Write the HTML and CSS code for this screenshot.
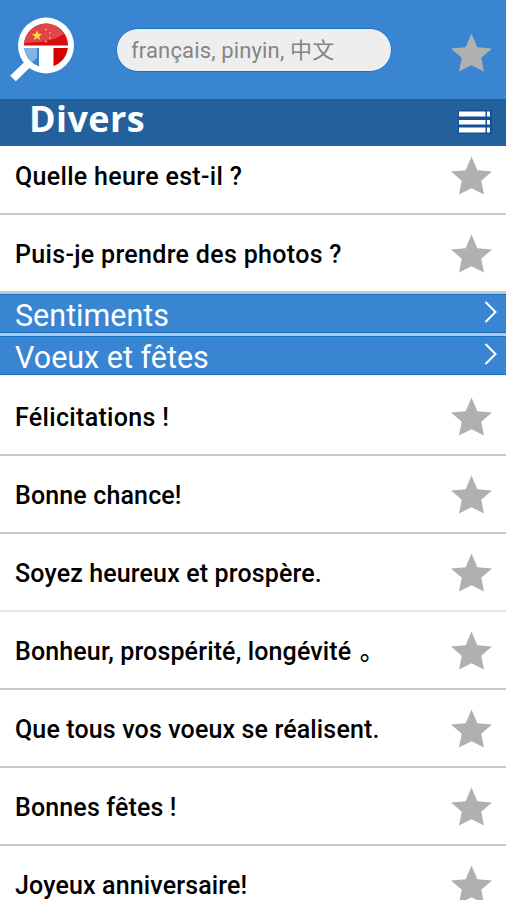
FILE: index.html
```html
<!DOCTYPE html>
<html lang="fr">
<head>
  <meta charset="UTF-8">
  <meta name="viewport" content="width=device-width, initial-scale=1.0">
  <title>Divers</title>
  <link rel="stylesheet" href="styles.css">
</head>
<body>

  <svg class="hidden">
    <symbol id="star" viewBox="0 0 42 40">
      <path d="M21 0 L27 14 L42 15.3 L31 24.8 L33.8 39 L21 32.6 L8.2 39 L11 24.8 L0 15.3 L15 14 Z"/>
    </symbol>
    <symbol id="chevron" viewBox="0 0 14 24">
      <path d="M1.5 2 L11.5 12 L1.5 22" fill="none" stroke="#fff" stroke-width="2"/>
    </symbol>
  </svg>

  <header class="header">
    <svg class="logo" viewBox="0 0 66 66">
      <clipPath id="flags"><circle cx="37" cy="28.5" r="22"/></clipPath>
      <path d="M22 44 L4 61.5" stroke="#fff" stroke-width="8"/>
      <circle cx="37" cy="28.5" r="28" fill="#fff"/>
      <g clip-path="url(#flags)">
        <rect x="14" y="5" width="46" height="23.5" fill="#d40f12"/>
        <path d="M14 5 H53 L55 17 C45 24 30 26 14 26 Z" fill="#e04547"/>
        <rect x="14" y="31" width="16" height="22" fill="#3a85d2"/>
        <path d="M14 31 H28 V41 C23 46 19 47 14 48 Z" fill="#83b3e5"/>
        <rect x="44.5" y="31" width="16" height="22" fill="#d40000"/>
      </g>
      <path d="M28 13.5 L29.4 16.7 L33 17.1 L30.2 19.5 L31.2 23 L28 21.1 L24.8 23 L25.8 19.5 L23 17.1 L26.6 16.7 Z" fill="#ffd84a"/>
      <g fill="#f5a03c">
        <circle cx="37" cy="12.5" r="1.1"/>
        <circle cx="41" cy="16" r="1.1"/>
        <circle cx="41" cy="21" r="1.1"/>
        <circle cx="37" cy="24.5" r="1.1"/>
      </g>
    </svg>
    <input class="search" type="text" placeholder="français, pinyin, 中文">
    <svg class="star"><use href="#star"/></svg>
  </header>

  <div class="title-bar">
    <h1 class="title">Divers</h1>
    <svg class="menu" viewBox="0 0 34 24">
      <path d="M0 0 H34 V24 H0 Z" fill="#164f96"/>
      <path d="M1 1.5 H27.5 V6.5 H1 Z M29 1.5 H32 V6.5 H29 Z M1 10 H27.5 V14.5 H1 Z M29 10 H32 V14.5 H29 Z M1 17.5 H27.5 V22.5 H1 Z M29 17.5 H32 V22.5 H29 Z" fill="#fff"/>
    </svg>
  </div>

  <div class="list">
    <div class="row first wide"><span>Quelle heure est-il ?</span><svg class="star"><use href="#star"/></svg></div>
    <div class="row wide"><span>Puis-je prendre des photos ?</span><svg class="star"><use href="#star"/></svg></div>
  </div>

  <div class="categories">
    <div class="category"><span>Sentiments</span><svg class="chevron"><use href="#chevron"/></svg></div>
    <div class="category"><span>Voeux et fêtes</span><svg class="chevron"><use href="#chevron"/></svg></div>
  </div>

  <div class="list">
    <div class="row open wide"><span>Félicitations !</span><svg class="star"><use href="#star"/></svg></div>
    <div class="row"><span>Bonne chance!</span><svg class="star"><use href="#star"/></svg></div>
    <div class="row light"><span>Soyez heureux et prospère.</span><svg class="star"><use href="#star"/></svg></div>
    <div class="row"><span>Bonheur, prospérité, longévité <span class="stop">。</span></span><svg class="star"><use href="#star"/></svg></div>
    <div class="row"><span>Que tous vos voeux se réalisent.</span><svg class="star"><use href="#star"/></svg></div>
    <div class="row"><span>Bonnes fêtes !</span><svg class="star"><use href="#star"/></svg></div>
    <div class="row"><span>Joyeux anniversaire!</span><svg class="star"><use href="#star"/></svg></div>
  </div>

</body>
</html>
```
FILE: styles.css
```css
* {
  box-sizing: border-box;
}
body {
  margin: 0;
  height: 900px;
  overflow: hidden;
  background: #fff;
  font-family: Roboto, "Noto Sans CJK SC", sans-serif;
}
.hidden {
  display: none;
}
.header {
  display: flex;
  align-items: center;
  height: 99px;
  padding: 0 14px 0 9px;
  background: #3a85d2;
}
.logo {
  width: 66px;
  height: 66px;
}
.search {
  width: 276px;
  height: 44px;
  margin-left: 41px;
  padding: 1px 14px 0;
  border: 1px solid #1775c8;
  border-radius: 22px;
  background: #eeeeee;
  font: 22px Roboto, "Noto Sans CJK SC", sans-serif;
  letter-spacing: 0.15px;
}
.search::placeholder {
  color: #858585;
}
.star {
  flex: none;
  width: 41px;
  height: 40px;
  margin-left: auto;
  fill: #b0b0b0;
}
.header .star {
  margin-top: 6px;
}
.title-bar {
  display: flex;
  align-items: center;
  justify-content: space-between;
  height: 47px;
  padding: 0 14px 0 29px;
  background: #23619c;
}
.title {
  margin: 0;
  padding-bottom: 7px;
  color: #fff;
  font: bold 36px/42px "Open Sans", sans-serif;
  letter-spacing: 0.4px;
}
.menu {
  width: 34px;
  height: 24px;
  margin-bottom: 2px;
}
.row {
  display: flex;
  align-items: center;
  height: 78px;
  padding: 2px 14px 0 15px;
  border-bottom: 2px solid #c8c8c8;
  font-size: 25px;
  font-weight: 500;
  line-height: 30px;
  letter-spacing: 0.14px;
  white-space: nowrap;
  color: #000;
}
.row > span {
  padding-top: 2px;
}
.row.first {
  height: 69px;
  padding-bottom: 9px;
}
.row.open {
  height: 80px;
  padding-top: 3px;
}
.row.light {
  border-color: #e4e4e4;
}
.row.wide {
  letter-spacing: 0.32px;
}
.stop {
  margin-left: 2px;
}
.categories {
  display: grid;
  gap: 3px;
  padding-top: 1px;
  background: #b4c8ee;
  border-bottom: 1px solid #e6f3fd;
}
.category {
  display: flex;
  align-items: center;
  justify-content: space-between;
  height: 39px;
  padding: 4px 8px 0 15px;
  border: solid #1272c6;
  border-width: 1px 0;
  background: #3a85d2;
  color: #fff;
  font-size: 30.5px;
  line-height: 34px;
}
.chevron {
  width: 14px;
  height: 24px;
  margin-bottom: 8px;
}
```
